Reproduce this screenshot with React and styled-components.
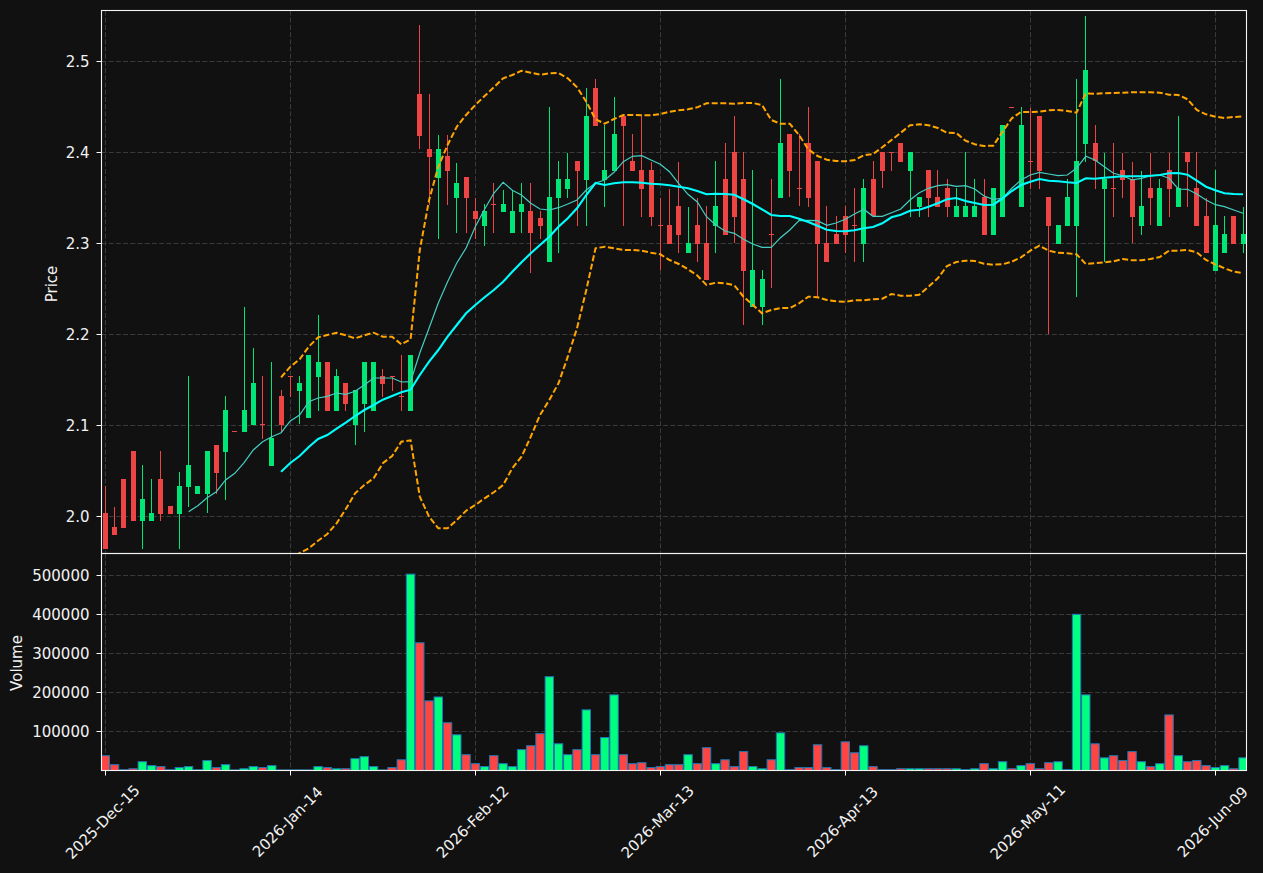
import React from 'react';
import styled, { createGlobalStyle } from 'styled-components';

// [direction, high, body top, body bottom, low] in chart pixels, one row per session
const candles = [
  ['d',486,513,549,549],['d',506.7,527,535,535],['d',479,479,528,528],['d',451,451,521,521],
  ['u',465,499,521,548.7],['u',479,513,521,521],['d',451,479,514,520.7],['d',506,506,514,514],
  ['u',472,486,514,548.7],['u',376,465,487,506.7],['u',486,486,494,494],['u',451,451,494,513],
  ['d',445,445,473,494],['u',396,410,452,500],['d',431,431,432,432],['u',307,410,432,432],
  ['u',348,383,425,425],['d',376,424,425,439],['u',362,438,466,466],['d',390,396,425,432],
  ['d',376,376,377,397.3],['u',376,383,391,424.3],['u',355,355,418,418],['u',315,362,377,410.7],
  ['d',362,362,411,411],['u',369.3,376,411,411],['d',383,383,404,411],['u',390,390,425,445.3],
  ['u',362,362,404,431.7],['u',362,362,411,411],['d',369.3,376,384,396.7],['d',376,376,377,390.7],
  ['d',355.3,396,397,411],['u',355,355,411,411],['d',25.3,94,136,149.3],['d',94.3,149.3,157,205],
  ['u',135.3,149.3,178,238.7],['d',135.3,156,171,205],['u',163.3,183,198,232.7],['d',177,177,198,232.7],
  ['d',198,211,219,238.7],['u',204.3,211,226,246],['d',183,204,205,232.7],['u',190.3,204,212,212],
  ['u',190.3,211,233,233],['u',183,204,212,232.7],['d',183,211,233,273.3],['d',211,218,226,238.7],
  ['u',107.3,197,262,262],['u',161.3,179,198,252.7],['u',152.7,179,189,198],['d',161,161,171,226],
  ['u',88.3,116,180,226],['d',79.3,88,126,126],['u',125.3,170,180,206.7],['u',97.3,134,171,171],
  ['d',116,116,126,226],['d',134.3,161,171,171],['d',116,170,189,216.7],['d',162,170,217,226],
  ['d',198,225,226,270],['d',188.7,225,244,244],['d',161.7,206,235,252.7],['u',206.7,243,253,253],
  ['d',197.7,225,244,261.7],['d',206.3,243,280,280],['u',161.3,206,226,252.7],['d',143.3,179,235,235],
  ['d',116.3,152,217,243.3],['d',152,179,271,325.3],['u',170,270,307,307],['u',270.3,279,307,325.3],
  ['d',179.3,234,235,288.3],['u',79.3,143,198,198],['d',134,134,171,197.3],['d',134,188,189,206.3],
  ['d',107.3,143,198,206.7],['d',161,161,244,296.7],['d',206.3,243,262,262],['d',216,234,244,244],
  ['d',206,216,235,253],['d',188.3,225,226,261.7],['u',179.3,188,244,261.7],['d',161.3,179,216,216],
  ['d',152,152,171,188.3],['d',152,152,153,171],['d',143,143,162,162],['u',152,152,171,216.7],
  ['u',197,197,207,216.7],['d',170,170,198,216.7],['d',170.3,197,207,207],['d',179.3,188,207,216.7],
  ['u',188.3,206,217,217],['u',152.3,206,217,217],['u',179.3,206,217,217],['d',179.3,197,235,235],
  ['u',188,188,235,235],['u',125,125,217,217],['d',107.3,107.3,108,108],['u',107.3,125,207,207],
  ['d',107.7,161,162,189.3],['d',116,116,171,188.7],['d',197,197,226,334.3],['u',225,225,244,244],
  ['u',179.3,197,226,226],['u',79.3,161,226,297.3],['u',16.3,70,144,161.7],['d',125.3,143,161,188.7],
  ['u',152.7,179,189,261.7],['d',143.3,188,189,216.7],['d',152.7,170,180,197.7],['d',161.7,179,217,243.3],
  ['u',170.7,206,226,234.7],['d',152.7,188,198,225.3],['u',179.3,188,226,226],['d',152.7,170,189,216.7],
  ['u',116.3,188,207,207],['d',152,152,162,206.7],['d',152.3,188,226,226],['d',197.7,216,253,253],
  ['u',170.3,225,271,271],['u',216.3,234,253,253],['d',216,216,244,244],['u',206.7,234,244,252.7],
];

// volume per session, in thousands
const volumes = [
  37.5,14.5,1.5,4,22,12,9.5,1.5,7,9.5,1.5,25,7,14.5,1,4,9.5,7,12,1,1,1,1,9.5,7,4,4,30,35,9.5,1,7,27,
  503,327,178,188,122,91,40,17,9.5,37.5,17,9.5,53,63,94,240,68,40,53,155,40,84,193.5,40,17,19.5,7,9.5,
  14.5,14.5,40,17,58,17,27,9.5,48,9.5,4,27,96,1.5,7,7,65.5,7,1.7,73,45,63,9.5,1.5,1.5,4,4,4,4,4,4,4,
  1.5,4,17,4,22,4,12,17,4,19.5,22,1.5,400,193.5,68,32,37.5,25,48,22,9.5,17,142,37.5,22,25,12,7,12,4,32,
];

// short moving average starts at session 9, the others at session 19
const maShort = [
  511.7,505.7,497.7,491.7,480,473.3,462.7,450,441.7,436.7,432.7,421,415,401.7,398,396.3,393,394.3,391.3,
  385,378,378,378,382,381.7,353,328,303,281.7,263,248,226.7,209.3,193.3,182.3,190.3,195,203.3,209,210,
  207.7,204,200,190,183,180,172.3,161.7,156.3,155.7,160,164.3,171.7,183.7,194.3,202,216.7,225,231,233.3,
  239.3,244,247.3,247.3,237.7,230,220.7,220.3,220.7,225.3,223,219.3,214,209.3,216.3,216.3,212.7,209,200,
  192.7,188.3,185.7,184.7,186.3,185.7,189,196,199.3,198.3,188.3,180,175,172.3,174,175.7,175,168.3,156.3,
  160,166.7,173.3,175.7,180,178.3,176,175,178.3,189,189.3,194,200,204.7,206.7,210,213.3,
];

const maLong = [
  471.7,463,456,447,439,435,428.7,422.7,416,410,405,399.7,396,392.3,389.7,375,361.7,350,336.7,325,313.3,
  305,297.3,290,281.7,271.7,262.3,253.3,245,236.7,226.7,218.3,208.3,195,183,185,183.3,182.3,182.3,182.7,
  183.7,184.3,185.3,186.7,188.3,191,194.3,193.7,194,194.7,199.3,204,209.3,215,216,216,218.7,222,225.7,
  229.7,231,231.3,230.3,228.3,227,223.3,217.3,214.7,210.7,209.7,206.7,203.3,199.3,198,201,203,205,204.7,
  198.3,191,185,181.7,179,180.7,181.3,182.3,183,178.3,178.7,177.7,177,176.3,176.3,176.3,175.7,175,173.3,
  173,174.7,180.7,186.7,190.3,193.3,194,194.3,
];

const bandUpper = [
  377.3,366.7,359.3,346.7,337.3,335,332.7,335.3,338.3,335.3,332.7,336.7,336.7,344.3,339.3,250,200,166.7,145,
  126.7,115,105,96,87.3,78.3,75,70.7,72.7,74.7,73.3,73,78.3,87.3,101.7,119.3,123.7,119,115,115,115.3,115.3,
  114,111.7,110.3,109.3,107.3,103.3,103.3,103.3,103.7,103,103,105,120,123.7,123.7,135,149.3,156,159.7,161,
  161.3,160,155.3,154,147.3,140,132.7,125.3,124.3,125.3,128,132.7,133,140.7,144.3,146,145.7,131.7,118.3,112,
  112,111.7,110.3,110,111,112.7,93.3,93.7,93.3,93,92.7,92.3,92.3,92.3,92.7,94.7,95,99.3,110,114.3,116.7,118,
  117,116.3,
];

const bandLower = [
  565,559,553,548.3,540.7,534,523.3,509,493.3,485,478.3,463.3,456,441.7,440.3,496.7,516.7,528.3,528.3,520,
  510.7,505,498.3,492.3,485,468.3,456.7,436.7,415,400,383.3,356.7,328.3,290,248.3,246.7,248.3,250,250,250.7,
  252.7,254.3,260,264,269.3,275.5,285,282.7,283.3,285.3,296.7,305,313.3,310,308,308,303.3,296.7,297.3,300,
  301.3,301.7,300.3,300.3,299.3,298.7,294,295.7,295.7,294.7,286.7,278.3,266,262,260.7,261,263.7,264.7,264.3,
  261.7,257.3,250.7,245.7,250.7,252.7,253.3,254.3,264,263.3,262.3,261.3,259,260.3,260.3,259,257,250.7,250.7,
  250,252.3,260,264.3,268.3,271.7,273,
];

const dateTicks = [
  { index: 0, label: '2025-Dec-15' },
  { index: 20, label: '2026-Jan-14' },
  { index: 40, label: '2026-Feb-12' },
  { index: 60, label: '2026-Mar-13' },
  { index: 80, label: '2026-Apr-13' },
  { index: 100, label: '2026-May-11' },
  { index: 120, label: '2026-Jun-09' },
];

const priceTicks = [
  { y: 61.5, label: '2.5' },
  { y: 152.5, label: '2.4' },
  { y: 243.5, label: '2.3' },
  { y: 334.5, label: '2.2' },
  { y: 425.5, label: '2.1' },
  { y: 516.5, label: '2.0' },
];

const volumeTicks = [500000, 400000, 300000, 200000, 100000];

const LEFT = 101.5;
const RIGHT = 1246.5;
const TOP = 10.5;
const SPLIT = 553.5;
const BOTTOM = 770.5;

const slotX = (i) => 105.3 + i * 9.25;
const volumeY = (thousands) => 770.3 - thousands * 0.39;
const linePoints = (values, start) =>
  values.map((y, i) => `${slotX(start + i).toFixed(1)},${y}`).join(' ');

const GlobalStyle = createGlobalStyle`
  html, body {
    margin: 0;
    height: 100%;
    background: #111111;
  }
`;

const Page = styled.main`
  width: 1263px;
  height: 873px;
  background: #111111;
  overflow: hidden;
`;

const ChartSvg = styled.svg`
  display: block;
  width: 1263px;
  height: 873px;
  font-family: 'DejaVu Sans', sans-serif;
`;

const GridLine = styled.line`
  stroke: #3a3a3a;
  stroke-width: 1;
  stroke-dasharray: 5 2.2;
`;

const TickMark = styled.line`
  stroke: #ffffff;
  stroke-width: 1;
`;

const Frame = styled.rect`
  fill: none;
  stroke: #f4f4f4;
  stroke-width: 1.1;
`;

const Wick = styled.line`
  stroke: ${(p) => (p.$up ? '#00e676' : '#ef4444')};
  stroke-width: 1;
  shape-rendering: crispEdges;
`;

const CandleBody = styled.rect`
  fill: ${(p) => (p.$up ? '#00e676' : '#ef4444')};
  shape-rendering: crispEdges;
`;

const VolumeBar = styled.rect`
  fill: ${(p) => (p.$up ? '#00ff7f' : '#ff4444')};
  stroke: #1f77b4;
  stroke-width: 1;
`;

const BandLine = styled.polyline`
  fill: none;
  stroke: #ffa500;
  stroke-width: 2;
  stroke-dasharray: 6 2.6;
`;

const ShortAverage = styled.polyline`
  fill: none;
  stroke: #45cfc2;
  stroke-width: 1.2;
`;

const LongAverage = styled.polyline`
  fill: none;
  stroke: #00ffff;
  stroke-width: 2.1;
`;

const AxisText = styled.text`
  fill: #f2f2f2;
  font-size: 15px;
`;

const ValueLabel = styled(AxisText)`
  text-anchor: end;
  dominant-baseline: central;
`;

const CenteredLabel = styled(AxisText)`
  text-anchor: middle;
  dominant-baseline: central;
`;

const App = () => {
  return (
    <Page>
      <GlobalStyle />
      <ChartSvg viewBox="0 0 1263 873" role="img" aria-label="Price and volume chart">
        <defs>
          <clipPath id="price-area">
            <rect x={LEFT} y={TOP} width={RIGHT - LEFT} height={SPLIT - TOP} />
          </clipPath>
        </defs>

        {dateTicks.map(({ index }) => {
          const x = Math.floor(slotX(index)) + 0.5;
          return (
            <g key={index}>
              <GridLine x1={x} x2={x} y1={TOP} y2={SPLIT} />
              <GridLine x1={x} x2={x} y1={SPLIT} y2={BOTTOM} />
              <TickMark x1={x} x2={x} y1={BOTTOM} y2={BOTTOM + 5} />
            </g>
          );
        })}

        {priceTicks.map(({ y, label }) => (
          <g key={label}>
            <GridLine x1={LEFT} x2={RIGHT} y1={y} y2={y} />
            <TickMark x1={LEFT - 5} x2={LEFT} y1={y} y2={y} />
            <ValueLabel x={89.5} y={y}>{label}</ValueLabel>
          </g>
        ))}

        {volumeTicks.map((value) => {
          const y = Math.floor(volumeY(value / 1000)) + 0.5;
          return (
            <g key={value}>
              <GridLine x1={LEFT} x2={RIGHT} y1={y} y2={y} />
              <TickMark x1={LEFT - 5} x2={LEFT} y1={y} y2={y} />
              <ValueLabel x={89.5} y={y}>{value}</ValueLabel>
            </g>
          );
        })}

        <g clipPath="url(#price-area)">
          {candles.map(([dir, high, top, bottom, low], i) => {
            const x = Math.floor(slotX(i)) + 0.5;
            return (
              <g key={i}>
                <Wick $up={dir === 'u'} x1={x} x2={x} y1={high} y2={low} />
                <CandleBody $up={dir === 'u'} x={x - 2.5} y={top} width={5} height={bottom - top} />
              </g>
            );
          })}
          <BandLine points={linePoints(bandUpper, 19)} />
          <BandLine points={linePoints(bandLower, 19)} />
          <ShortAverage points={linePoints(maShort, 9)} />
          <LongAverage points={linePoints(maLong, 19)} />
        </g>

        {volumes.map((value, i) => {
          const y = volumeY(value);
          const left = Math.max(slotX(i) - 4.2, LEFT);
          const right = Math.min(slotX(i) + 4.2, RIGHT);
          return (
            <VolumeBar
              key={i}
              $up={candles[i][0] === 'u'}
              x={left}
              y={y}
              width={right - left}
              height={BOTTOM - y}
            />
          );
        })}

        <Frame x={LEFT} y={TOP} width={RIGHT - LEFT} height={SPLIT - TOP} />
        <Frame x={LEFT} y={SPLIT} width={RIGHT - LEFT} height={BOTTOM - SPLIT} />

        <CenteredLabel x={52} y={284} transform="rotate(-90 52 284)">Price</CenteredLabel>
        <CenteredLabel x={17} y={663} transform="rotate(-90 17 663)">Volume</CenteredLabel>

        {dateTicks.map(({ index, label }) => {
          const x = slotX(index) - 2.5;
          return (
            <CenteredLabel key={label} x={x} y={822} transform={`rotate(-45 ${x} 822)`}>
              {label}
            </CenteredLabel>
          );
        })}
      </ChartSvg>
    </Page>
  );
};

export default App;
